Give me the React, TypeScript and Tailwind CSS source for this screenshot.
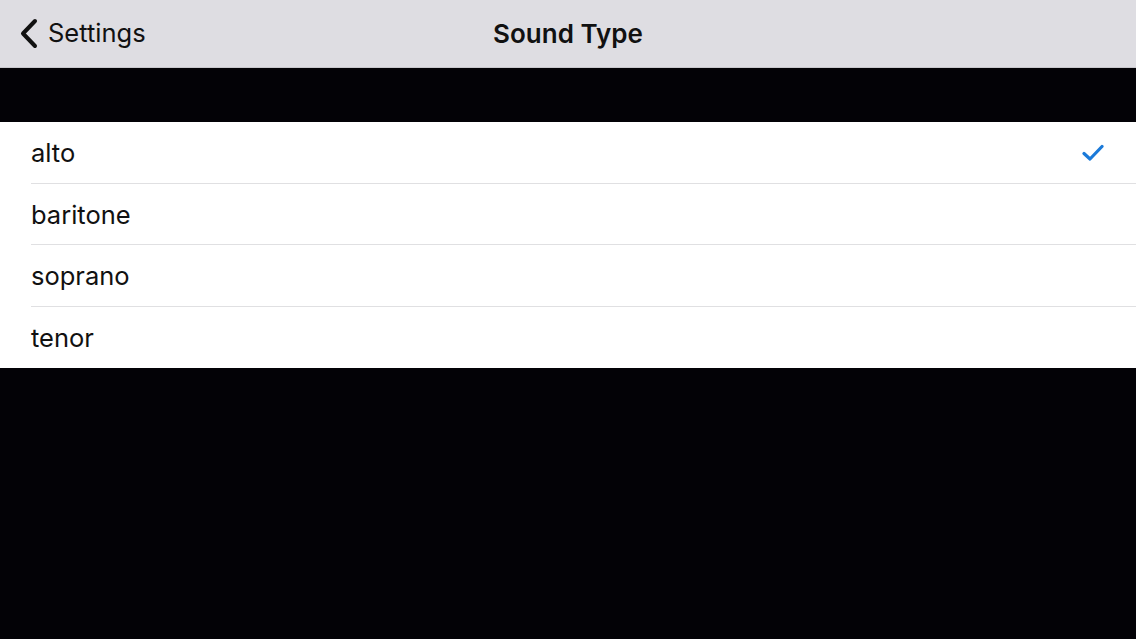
const options = ["alto", "baritone", "soprano", "tenor"];

export default function App() {
  const selected = "alto";
  return (
    <div
      className="w-[1136px] h-[639px] bg-[#030206] overflow-hidden"
      style={{ fontFamily: "Inter, 'Noto Sans', sans-serif" }}
    >
      <header className="relative h-[68px] bg-[#dedde2] border-b border-[#c8c7cc] flex items-center">
        <div className="flex items-center pl-[18px] gap-[9px] text-[25.5px] text-[#111]">
          <svg width="21" height="31" viewBox="0 0 21 31" fill="none">
            <path d="M17 3 L5 15.5 L17 28" stroke="#111" strokeWidth="4" strokeLinecap="round" strokeLinejoin="round" />
          </svg>
          <span>Settings</span>
        </div>
        <h1 className="absolute left-0 right-0 text-center text-[26px] font-semibold text-[#111] pointer-events-none">
          Sound Type
        </h1>
      </header>
      <div className="h-[54px]" />
      <ul className="bg-white">
        {options.map((o, i) => (
          <li key={o} className="pl-[31px]">
            <div
              className={`h-[61.5px] flex items-center justify-between pr-[32px] pt-[2px] ${
                i < options.length - 1 ? "border-b border-[#e0e0e2]" : ""
              }`}
            >
              <span className="text-[25.5px] text-[#111]">{o}</span>
              {o === selected && (
                <svg width="22" height="18" viewBox="0 0 22 18" fill="none">
                  <path d="M2 9.5 L8 15 L20 2.5" stroke="#1b7ad9" strokeWidth="3.2" strokeLinecap="round" strokeLinejoin="round" />
                </svg>
              )}
            </div>
          </li>
        ))}
      </ul>
    </div>
  );
}
